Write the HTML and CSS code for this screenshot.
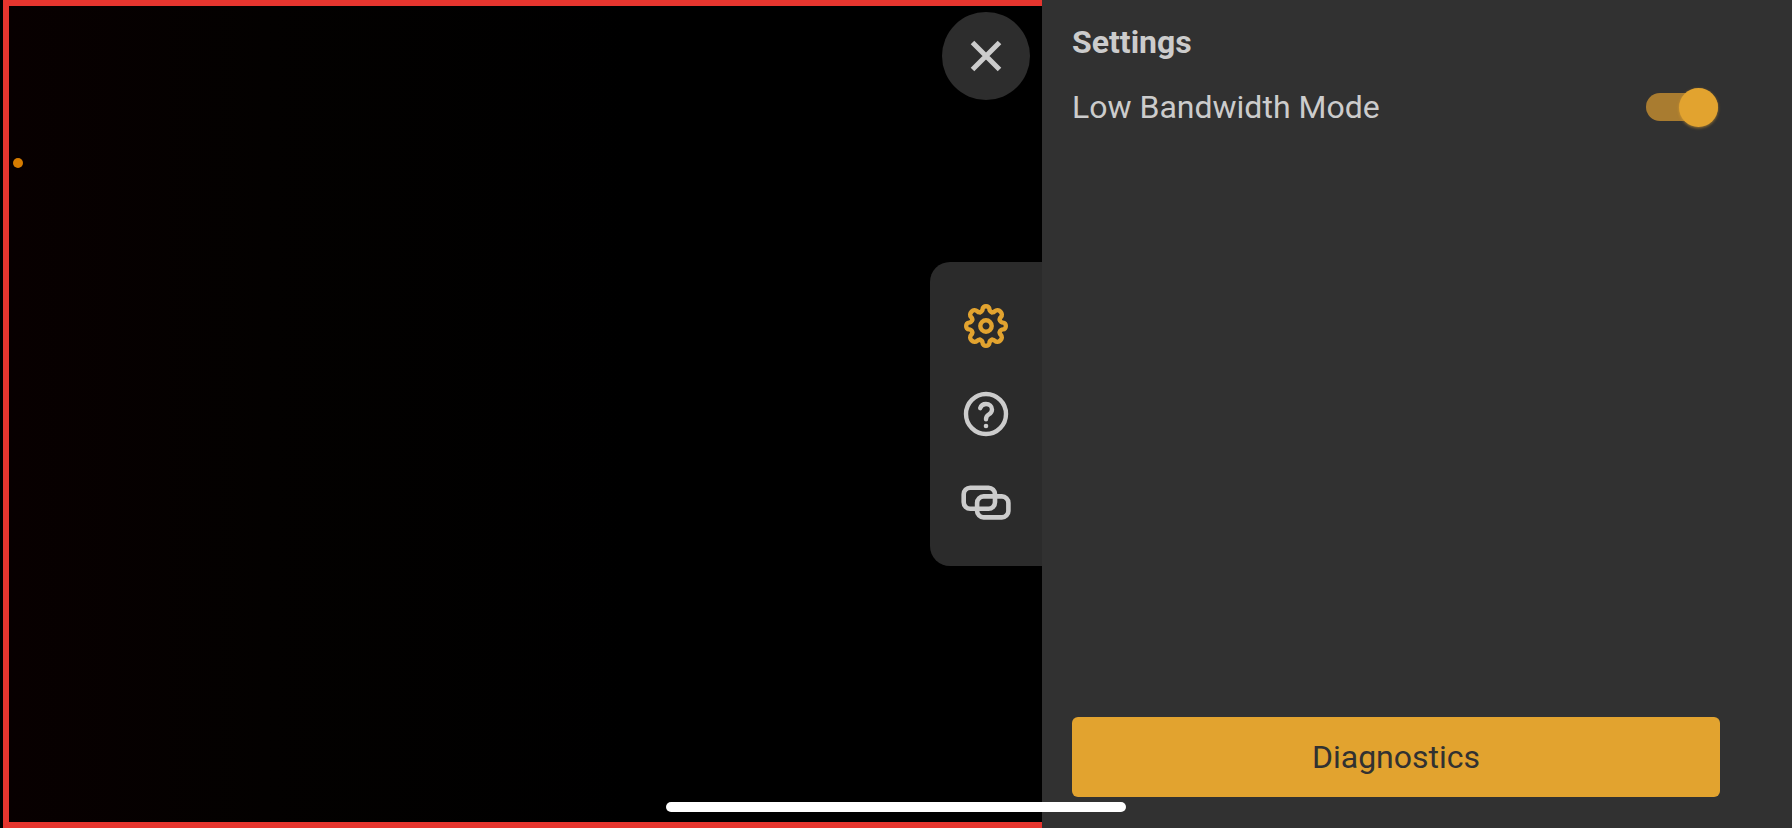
FILE: index.html
```html
<!DOCTYPE html>
<html lang="en">
<head>
    <meta charset="UTF-8">
    <meta name="viewport" content="width=device-width, initial-scale=1.0">
    <title>Settings</title>
    <link rel="stylesheet" href="styles.css">
</head>
<body>
    <main class="stage">
        <span class="status-dot"></span>

        <button class="close" type="button" aria-label="Close">
            <svg width="32" height="32" viewBox="-16 -16 32 32">
                <path d="M-13.5 -13.5L13.5 13.5M13.5 -13.5L-13.5 13.5" fill="none" stroke="currentColor" stroke-width="5"/>
            </svg>
        </button>

        <nav class="tabs">
            <button class="tab active" type="button" aria-label="Settings">
                <svg width="48" height="48" viewBox="-24 -24 48 48" fill="none" stroke="currentColor" stroke-width="4.4" stroke-linejoin="round" stroke-linecap="round">
                    <defs>
                        <path id="tooth" d="M-5.74 -13.86C-4.2 -14.5 -3.4 -15.7 -3.4 -17C-3.4 -18.8 -1.9 -19.8 0 -19.8C1.9 -19.8 3.4 -18.8 3.4 -17C3.4 -15.7 4.2 -14.5 5.74 -13.86"/>
                        <path id="wide-tooth" d="M-5.74 -13.86C-4.6 -14.33 -4.2 -15.6 -4.2 -16.8C-4.2 -19 -2.4 -20.4 0 -20.4C2.4 -20.4 4.2 -19 4.2 -16.8C4.2 -15.6 4.6 -14.33 5.74 -13.86"/>
                    </defs>
                    <use href="#tooth"/>
                    <use href="#wide-tooth" transform="rotate(45)"/>
                    <use href="#tooth" transform="rotate(90)"/>
                    <use href="#wide-tooth" transform="rotate(135)"/>
                    <use href="#tooth" transform="rotate(180)"/>
                    <use href="#wide-tooth" transform="rotate(225)"/>
                    <use href="#tooth" transform="rotate(270)"/>
                    <use href="#wide-tooth" transform="rotate(315)"/>
                    <circle r="5.7"/>
                </svg>
            </button>
            <button class="tab" type="button" aria-label="Help">
                <svg width="48" height="48" viewBox="-24 -24 48 48" fill="none" stroke="currentColor" stroke-width="4.4" stroke-linecap="round">
                    <circle r="20"/>
                    <path d="M-5.8 -5.8C-5 -8.6 -2.6 -10 0 -10C3.5 -10 6 -7.6 6 -4.6C6 -1.8 4.4 -.6 2.7 .5C.9 1.7 0 2.7 0 5.2"/>
                    <circle cy="12" r="2.3" fill="currentColor" stroke="none"/>
                </svg>
            </button>
            <button class="tab" type="button" aria-label="Link">
                <svg width="52" height="48" viewBox="-26 -24 52 48" fill="none" stroke="currentColor" stroke-width="4.6">
                    <rect x="-22.3" y="-14.3" width="31.3" height="21" rx="6.5"/>
                    <rect x="-8.9" y="-5.6" width="31.3" height="21" rx="6.5"/>
                </svg>
            </button>
        </nav>
    </main>

    <aside class="panel">
        <h1>Settings</h1>
        <div class="setting">
            <label for="bandwidth">Low Bandwidth Mode</label>
            <input class="switch" id="bandwidth" type="checkbox" role="switch" checked>
        </div>
        <button class="diagnostics" type="button">Diagnostics</button>
    </aside>

    <div class="home-bar"></div>
</body>
</html>
```
FILE: styles.css
```css
* {
    box-sizing: border-box;
}

body {
    margin: 0;
    min-height: 100vh;
    display: grid;
    grid-template-columns: 521fr 375fr;
    background: #000;
    color: #ccc;
    font-family: Roboto, sans-serif;
    font-size: 32px;
    line-height: 40px;
}

button {
    border: none;
    padding: 0;
    font: inherit;
    color: inherit;
    cursor: pointer;
}

/* Camera view */
.stage {
    position: relative;
    display: flex;
    align-items: center;
    justify-content: flex-end;
    margin-left: 3px;
    border: 6px solid #e6352e;
    border-right: none;
    background: linear-gradient(to right, #080000, #030100 25%, #000 60%);
}

.status-dot {
    position: absolute;
    left: 4px;
    top: 152px;
    width: 10px;
    height: 10px;
    border-radius: 50%;
    background: #d67c00;
}

.close {
    position: absolute;
    top: 6px;
    right: 12px;
    width: 88px;
    height: 88px;
    display: flex;
    align-items: center;
    justify-content: center;
    border-radius: 50%;
    background: #2d2d2d;
}

.tabs {
    display: flex;
    flex-direction: column;
    width: 112px;
    padding: 20px 0;
    border-radius: 20px 0 0 20px;
    background: #2b2b2b;
}

.tab {
    height: 88px;
    display: flex;
    align-items: center;
    justify-content: center;
    background: none;
}

.tab.active {
    color: #e2a32f;
}

/* Side panel */
.panel {
    display: flex;
    flex-direction: column;
    padding: 22px 72px 31px 30px;
    background: #313131;
}

h1 {
    margin: 0;
    font-size: 32px;
    font-weight: 700;
}

.setting {
    display: flex;
    align-items: center;
    justify-content: space-between;
    margin-top: 25px;
}

.switch {
    appearance: none;
    display: flex;
    align-items: center;
    width: 72px;
    height: 28px;
    margin: 0 2px;
    border-radius: 14px;
    background: #a97c30;
    cursor: pointer;
}

.switch::before {
    content: "";
    width: 39px;
    height: 39px;
    border-radius: 50%;
    background: #e2a32f;
    box-shadow: 0 1px 3px rgba(226, 163, 47, 0.6);
}

.switch:checked::before {
    margin-left: auto;
}

.diagnostics {
    height: 80px;
    margin-top: auto;
    border-radius: 6px;
    background: #e2a32f;
    color: #313131;
}

.home-bar {
    position: fixed;
    left: 50%;
    bottom: 16px;
    width: 460px;
    height: 10px;
    border-radius: 5px;
    background: #fff;
    transform: translateX(-50%);
}
```
